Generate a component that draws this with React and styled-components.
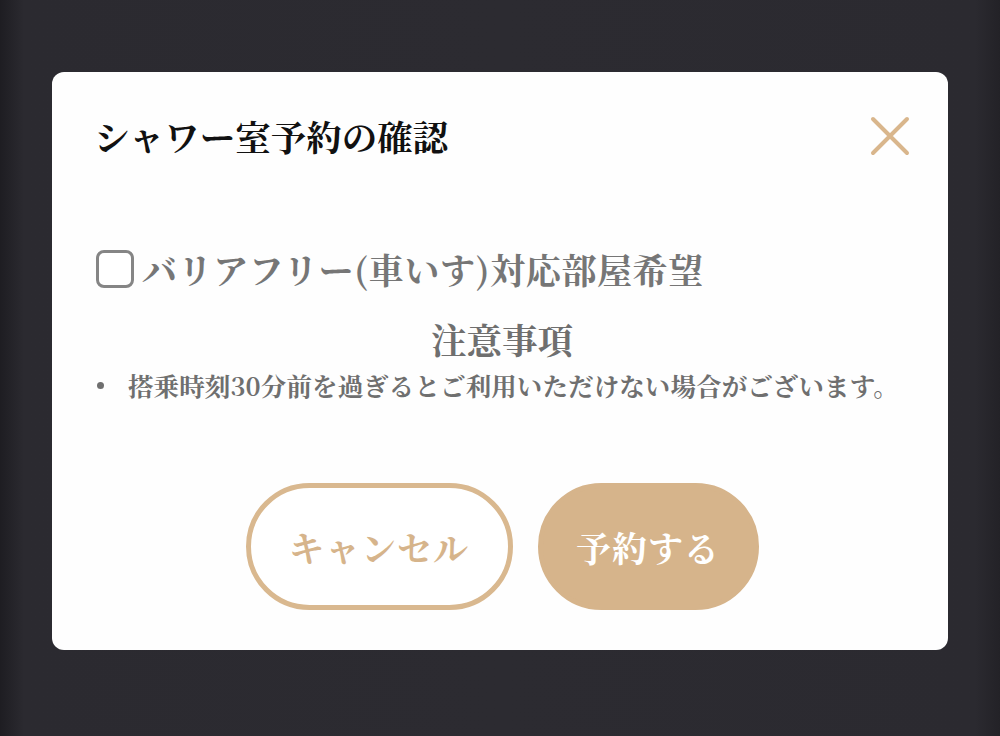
import React, { useState } from "react";
import styled, { createGlobalStyle } from "styled-components";

const GlobalStyle = createGlobalStyle`
  html, body {
    margin: 0;
    padding: 0;
  }
  body {
    font-family: "Noto Serif CJK JP", "Liberation Serif", "Noto Sans CJK JP", serif;
  }
`;

const Backdrop = styled.div`
  width: 1000px;
  height: 736px;
  box-sizing: border-box;
  padding-top: 72px;
  display: flex;
  justify-content: center;
  align-items: flex-start;
  background:
    linear-gradient(90deg, #1e1d22 0px, #2b2a30 24px, #2c2b31 50%, #2b2a30 975px, #232227 1000px),
    #2c2b31;
`;

const Modal = styled.div`
  width: 896px;
  height: 578px;
  box-sizing: border-box;
  background: #fefefe;
  border-radius: 12px;
  padding: 44px 38px 39px 42px;
  display: flex;
  flex-direction: column;
`;

const Header = styled.div`
  display: flex;
  justify-content: space-between;
  align-items: center;
  height: 40px;
`;

const Title = styled.h2`
  margin: 0;
  font-size: 35.5px;
  font-weight: 700;
  color: #111;
  line-height: 40px;
`;

const CloseButton = styled.button`
  width: 40px;
  height: 40px;
  padding: 0;
  border: none;
  background: none;
  cursor: pointer;
  display: flex;
  align-items: center;
  justify-content: center;
`;

const CheckRow = styled.label`
  margin-top: 91px;
  display: flex;
  align-items: center;
  gap: 8px;
  height: 44px;
  cursor: pointer;
`;

const Box = styled.span`
  width: 38px;
  height: 38px;
  margin-left: 2px;
  box-sizing: border-box;
  border: 3px solid #858585;
  border-radius: 8px;
  background: ${(props) => (props.checked ? "#d5b38a" : "#fff")};
`;

const CheckText = styled.span`
  font-size: 35px;
  font-weight: 700;
  color: #767676;
  line-height: 44px;
  letter-spacing: 0.6px;
`;

const NoticeTitle = styled.div`
  margin-top: 26px;
  text-align: center;
  font-size: 35.5px;
  font-weight: 700;
  color: #6f6f6f;
  line-height: 44px;
`;

const NoticeList = styled.ul`
  margin: 8px 0 0;
  padding: 0 0 0 34px;
  list-style: none;
`;

const NoticeItem = styled.li`
  position: relative;
  font-size: 25.5px;
  font-weight: 700;
  color: #6f6f6f;
  line-height: 32px;
  letter-spacing: 0.1px;
  white-space: nowrap;

  &::before {
    content: "";
    position: absolute;
    left: -31px;
    top: 13px;
    width: 7px;
    height: 7px;
    border-radius: 50%;
    background: #6f6f6f;
  }
`;

const Actions = styled.div`
  margin-top: 82px;
  display: flex;
  justify-content: center;
  gap: 25px;
`;

const PillButton = styled.button`
  width: ${(props) => props.w}px;
  height: 127px;
  box-sizing: border-box;
  border-radius: 64px;
  border: 5px solid ${(props) => (props.primary ? "#d6b48b" : "#d9b88f")};
  background: ${(props) => (props.primary ? "#d6b48b" : "#fff")};
  color: ${(props) => (props.primary ? "#fff" : "#d6b48b")};
  font-family: inherit;
  font-size: 35px;
  font-weight: 700;
  letter-spacing: 1px;
  cursor: pointer;
`;

const App = () => {
  const [checked, setChecked] = useState(false);

  return (
    <>
      <GlobalStyle />
      <Backdrop>
        <Modal>
          <Header>
            <Title>シャワー室予約の確認</Title>
            <CloseButton aria-label="close">
              <svg width="40" height="40" viewBox="0 0 40 40">
                <path
                  d="M3 3 L37 37 M37 3 L3 37"
                  stroke="#d9b68c"
                  strokeWidth="4"
                  strokeLinecap="round"
                  fill="none"
                />
              </svg>
            </CloseButton>
          </Header>

          <CheckRow onClick={() => setChecked(!checked)}>
            <Box checked={checked} />
            <CheckText>バリアフリー(車いす)対応部屋希望</CheckText>
          </CheckRow>

          <NoticeTitle>注意事項</NoticeTitle>
          <NoticeList>
            <NoticeItem>
              搭乗時刻30分前を過ぎるとご利用いただけない場合がございます。
            </NoticeItem>
          </NoticeList>

          <Actions>
            <PillButton w={267}>キャンセル</PillButton>
            <PillButton w={221} primary>
              予約する
            </PillButton>
          </Actions>
        </Modal>
      </Backdrop>
    </>
  );
};

export default App;
